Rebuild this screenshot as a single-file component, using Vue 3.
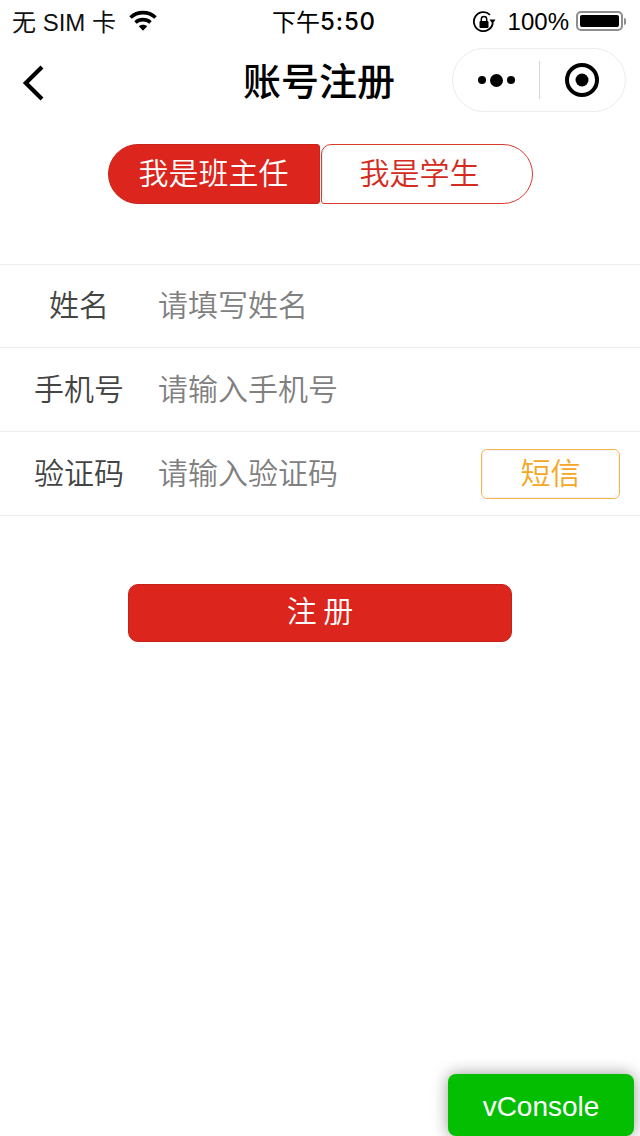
<script setup>
const rows = [
  { label: '姓名', placeholder: '请填写姓名' },
  { label: '手机号', placeholder: '请输入手机号' },
  { label: '验证码', placeholder: '请输入验证码', sms: true },
]
</script>

<template>
  <div class="page">
    <header class="status">
      <div class="status-left">
        <span class="carrier">无 SIM 卡</span>
        <svg class="wifi" width="30" height="22" viewBox="0 0 30 22">
          <path d="M2.500 8.500C9.500 2 20.500 2 27.500 8.500" fill="none" stroke="#000" stroke-width="3.600" />
          <path d="M7.500 13.500C11.800 9.700 18.200 9.700 22.500 13.500" fill="none" stroke="#000" stroke-width="3.600" />
          <path d="M10.800 17.300C13.300 15.300 16.700 15.300 19.200 17.300L15 21.800Z" fill="#000" />
        </svg>
      </div>
      <span class="time">下午<b>5:50</b></span>
      <div class="status-right">
        <svg class="lock" width="24" height="24" viewBox="0 0 24 24">
          <path d="M20.800 13A9.500 9.500 0 1 1 18 4.800" fill="none" stroke="#000" stroke-width="1.800" />
          <path d="M17.500 9.500L23.500 9.500L20.500 14Z" fill="#000" />
          <rect x="7.500" y="11" width="9" height="7" rx="1" fill="#000" />
          <path d="M9.300 11V9.300A2.700 2.700 0 0 1 14.700 9.300V11" fill="none" stroke="#000" stroke-width="1.500" />
        </svg>
        <span class="battery-text">100%</span>
        <div class="battery"><div class="battery-fill"></div></div>
        <div class="battery-tip"></div>
      </div>
    </header>

    <nav class="nav">
      <svg class="back" width="24" height="38" viewBox="0 0 24 38">
        <path d="M20 3L3.800 19L20 35" fill="none" stroke="#000" stroke-width="4.200" />
      </svg>
      <h1 class="title">账号注册</h1>
      <div class="capsule">
        <div class="capsule-cell dots">
          <i class="dot"></i><i class="dot big"></i><i class="dot"></i>
        </div>
        <div class="capsule-line"></div>
        <div class="capsule-cell">
          <svg width="36" height="36" viewBox="0 0 36 36">
            <circle cx="18" cy="18" r="15" fill="none" stroke="#000" stroke-width="4" />
            <circle cx="18" cy="18" r="6.500" fill="#000" />
          </svg>
        </div>
      </div>
    </nav>

    <div class="tabs">
      <div class="tab active"><span class="tab-text">我是班主任</span></div>
      <div class="tab"><span class="tab-text shift">我是学生</span></div>
    </div>

    <section class="form">
      <div v-for="row in rows" :key="row.label" class="row">
        <span class="label">{{ row.label }}</span>
        <span class="placeholder">{{ row.placeholder }}</span>
        <div v-if="row.sms" class="sms"><span class="sms-text">短信</span></div>
      </div>
    </section>

    <div class="submit"><span class="submit-text">注 册</span></div>

    <div class="vconsole">vConsole</div>
  </div>
</template>

<style>
html, body { margin: 0; background: #fff; }
</style>

<style scoped>
.page {
  position: relative;
  width: 640px;
  height: 1136px;
  overflow: hidden;
  background: #fff;
  font-family: "Noto Sans CJK SC", "Liberation Sans", sans-serif;
  color: #000;
}
.status {
  display: grid;
  grid-template-columns: 1fr auto 1fr;
  align-items: center;
  height: 40px;
  padding: 0 12px;
  box-sizing: border-box;
}
.status-left { display: flex; align-items: center; gap: 12px; }
.carrier { font-size: 24px; color: #111; padding-bottom: 2px; font-family: "Liberation Sans", "Noto Sans CJK SC", sans-serif; }
.wifi { margin-top: -2px; }
.time {
  display: flex;
  align-items: center;
  margin-left: 8px;
  font-size: 24px;
  line-height: 40px;
}
.time b {
  padding-top: 2px;
  font-family: "Inter", "Liberation Sans", sans-serif;
  font-weight: 500;
  font-size: 24px;
  letter-spacing: 0.900px;
}
.status-right { display: flex; align-items: center; justify-content: flex-end; }
.lock { margin-right: 12px; margin-top: 2px; }
.battery-text { font-size: 24px; margin-right: 7px; padding-top: 2px; font-family: "Liberation Sans", sans-serif; }
.battery {
  width: 47px;
  height: 20px;
  padding: 2px;
  box-sizing: border-box;
  border: 2px solid #8e8e8e;
  border-radius: 5px;
}
.battery-fill { width: 100%; height: 100%; background: #000; border-radius: 2px; }
.battery-tip { width: 2px; height: 7px; margin-left: 1px; margin-right: 2px; background: #8e8e8e; border-radius: 0 2px 2px 0; }

.nav {
  position: relative;
  display: flex;
  align-items: center;
  justify-content: space-between;
  height: 88px;
  padding: 0 14px 8px 22px;
  box-sizing: border-box;
}
.back { display: block; margin-top: 6px; }
.title {
  position: absolute;
  left: 0;
  right: 2px;
  top: 11px;
  margin: 0;
  text-align: center;
  font-size: 38px;
  line-height: 56px;
  font-weight: 500;
  pointer-events: none;
}
.capsule {
  display: flex;
  align-items: center;
  width: 174px;
  height: 64px;
  box-sizing: border-box;
  border: 1px solid #ececec;
  border-radius: 32px;
  background: #fff;
}
.capsule-cell { flex: 1; display: flex; align-items: center; justify-content: center; }
.capsule-line { width: 1px; height: 38px; background: #d8d8d8; }
.dots { gap: 4px; }
.dot { display: block; width: 8px; height: 8px; border-radius: 50%; background: #000; }
.dot:first-child { margin-left: 2px; }
.dot.big { width: 13px; height: 13px; }

.tabs {
  display: flex;
  justify-content: center;
  gap: 1px;
  margin-top: 16px;
}
.tab {
  position: relative;
  width: 212px;
  height: 60px;
  box-sizing: border-box;
  display: flex;
  align-items: center;
  justify-content: center;
  border: 1px solid #dc3a30;
  border-radius: 10px 30px 30px 3px;
  background: #fff;
  color: #d42a20;
  font-size: 30px;
  font-weight: 350;
}
.tab::after {
  content: "";
  position: absolute;
  inset: 0;
  border: 1px solid transparent;
  border-left-color: rgba(0, 0, 0, 0.08);
  border-radius: 10px 29px 29px 10px;
}
.tab-text { padding-bottom: 6px; }
.tab-text.shift { padding-right: 14px; }
.tab.active {
  border-color: #c9241b;
  border-radius: 30px 3px 3px 30px;
  background: #dc251c;
  color: #fff;
}
.tab.active::after { display: none; }

.form { margin-top: 60px; border-top: 1px solid #ececec; }
.row {
  display: flex;
  align-items: center;
  height: 84px;
  box-sizing: border-box;
  border-bottom: 1px solid #ececec;
  padding-right: 20px;
}
.row:first-child { height: 83px; }
.label {
  width: 158px;
  padding-bottom: 6px;
  text-align: center;
  font-size: 30px;
  color: #444;
  font-weight: 350;
}
.placeholder {
  flex: 1;
  padding-bottom: 6px;
  font-size: 30px;
  font-weight: 350;
  color: #808080;
}
.sms {
  position: relative;
  width: 139px;
  height: 50px;
  box-sizing: border-box;
  display: flex;
  align-items: center;
  justify-content: center;
  border: 1px solid #f3b451;
  border-radius: 6px;
  color: #f5a623;
  font-size: 30px;
  font-weight: 350;
}
.sms::after {
  content: "";
  position: absolute;
  inset: 0;
  border: 1px solid rgba(0, 0, 0, 0.05);
  border-radius: 9px;
}
.sms-text { padding-bottom: 6px; }

.submit {
  display: flex;
  align-items: center;
  justify-content: center;
  width: 384px;
  height: 58px;
  margin: 68px auto 0;
  box-sizing: border-box;
  border-radius: 10px;
  border: 1px solid #c4221a;
  background: #dc251c;
  color: #fff;
  font-size: 30px;
  font-weight: 350;
}
.submit-text { padding-bottom: 8px; }

.vconsole {
  position: absolute;
  right: 6px;
  bottom: 0;
  width: 186px;
  height: 62px;
  padding-top: 4px;
  box-sizing: border-box;
  display: flex;
  align-items: center;
  justify-content: center;
  border-radius: 8px;
  background: #04be02;
  color: #fff;
  font-family: "Liberation Sans", sans-serif;
  font-size: 28px;
  box-shadow: 0 0 16px rgba(0, 0, 0, 0.4);
}
</style>
